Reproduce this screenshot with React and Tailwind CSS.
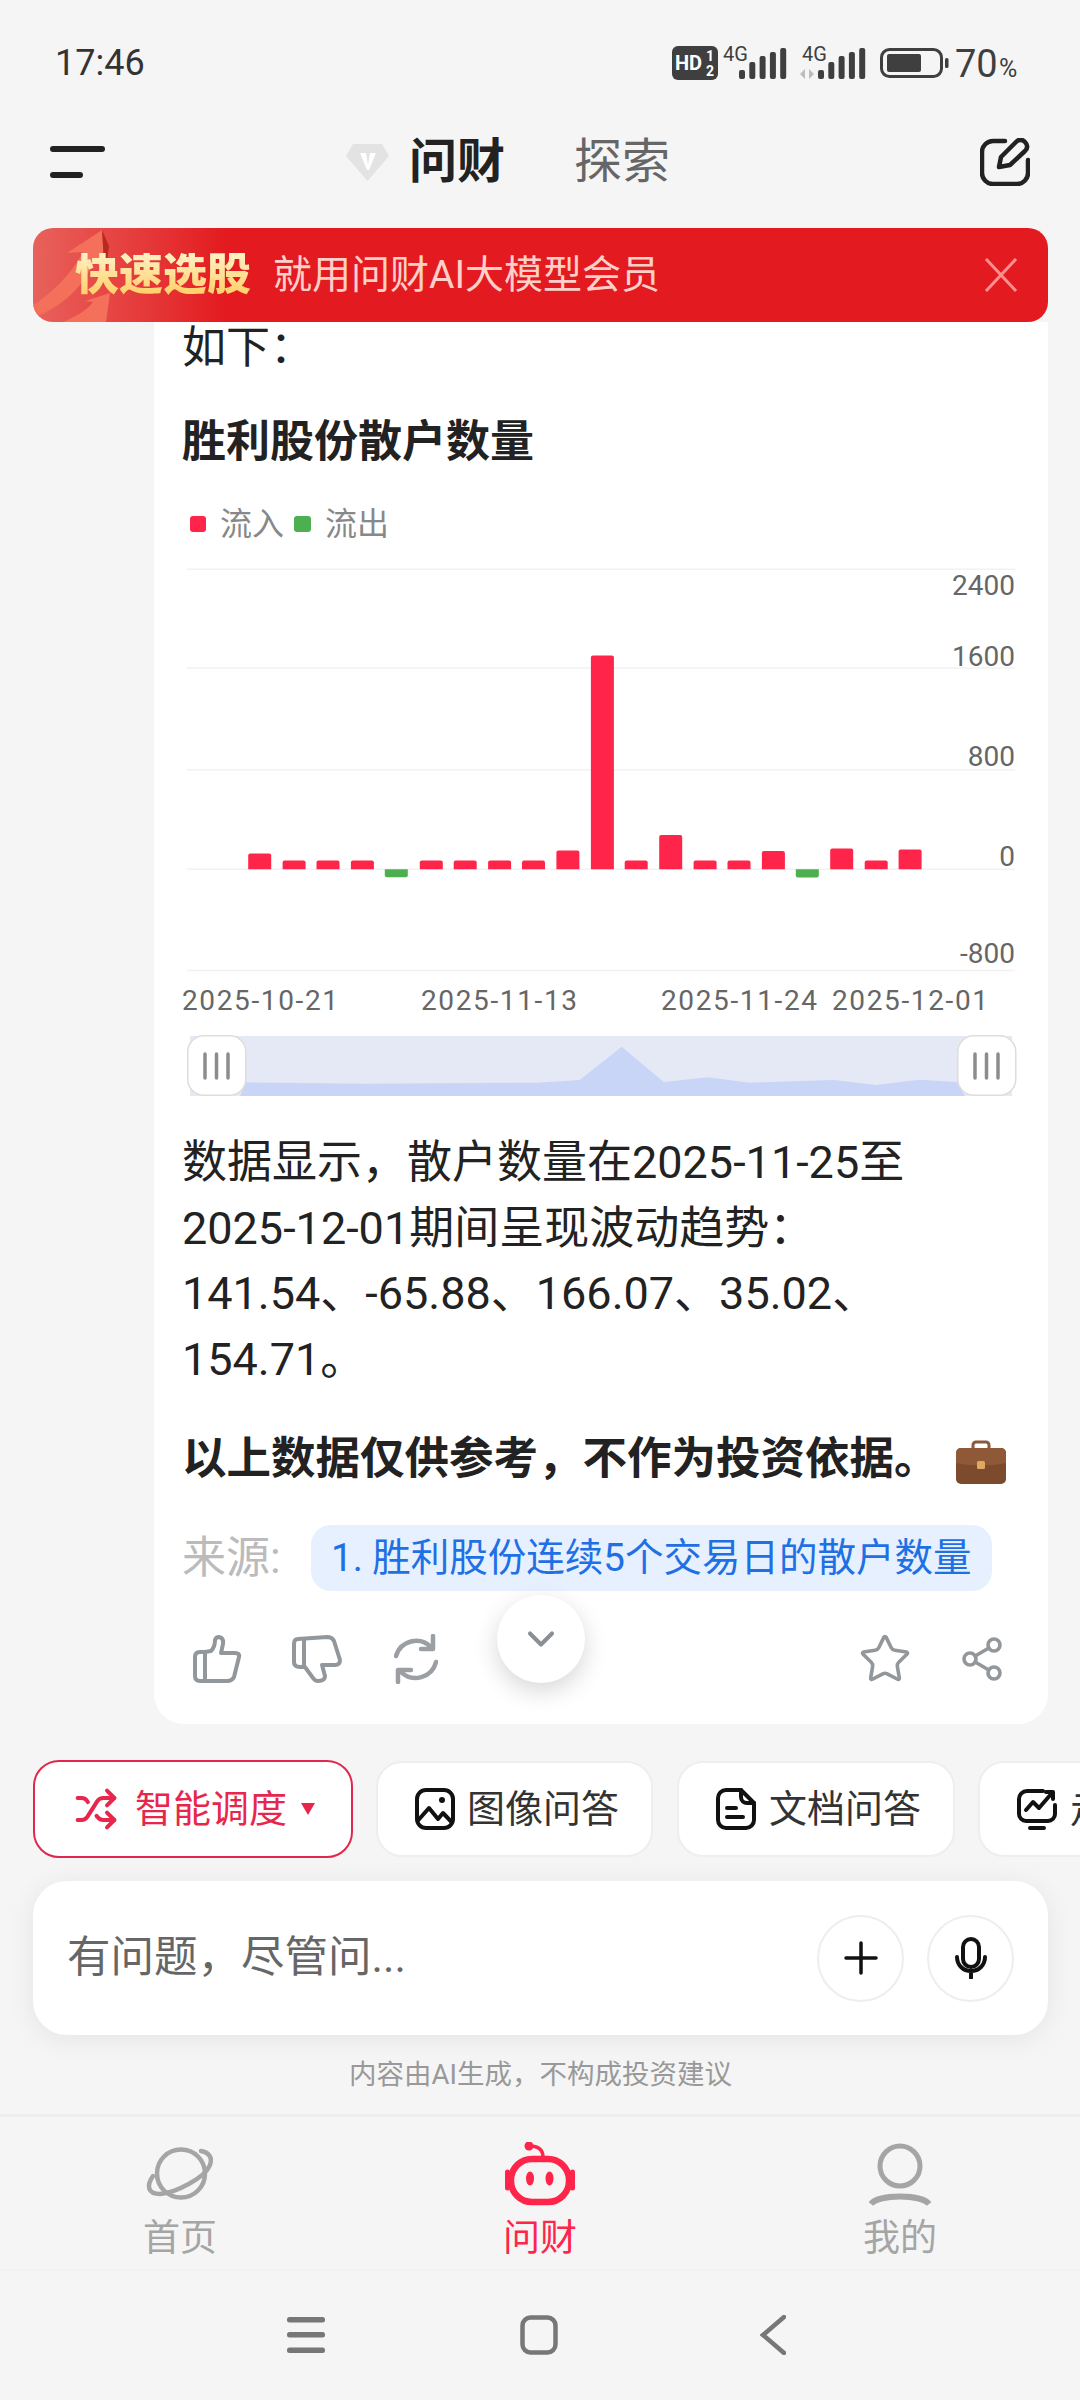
import React from 'react';
import { Star, Share2, ChevronDown, Shuffle } from 'lucide-react';

const bars = [
  [248.2, 853.5], [282.6, 860.6], [316.5, 860.6], [350.9, 860.6], [384.8, 877.2, 1], [419.8, 860.6], [453.7, 860.6], [488.1, 860.6],
  [522, 860.6], [556.4, 850.4], [590.9, 655.5], [624.7, 860.6], [659.2, 835], [693.6, 860.6], [727.5, 860.6], [761.9, 851],
  [795.8, 877.6, 1], [830.2, 848.4], [864.7, 860.6], [898.6, 849.6],
];
const zero = 869.3;
const gridY = [569.3, 668, 769.7, 869.3, 970.5];
const yLabels = [['2400', 585], ['1600', 656], ['800', 756], ['0', 856], ['-800', 953]];
const xLabels = [['2025-10-21', 182], ['2025-11-13', 421], ['2025-11-24', 661], ['2025-12-01', 832]];
const miniPts = [[135,187],[350,191],[655,188],[730,180],[805,80],[880,186],[958,172],[1033,188],[1183,180],[1258,195],[1335,179],[1402,186]]
  .map(([x, y]) => `${(170 + x / 1.782).toFixed(1)},${(1020 + y / 3).toFixed(1)}`).join(' ');

function Signal({ x }) {
  const hs = [9, 17, 23, 27, 31];
  return <g fill="#3f3f3f">{hs.map((h, i) => <rect key={i} x={x + i * 10.3} y={79 - h} width="6" height={h} rx="2" />)}</g>;
}

function StatusIcons() {
  return (
    <svg width="360" height="50" viewBox="665 38 360 50" className="shrink-0">
      <rect x="672" y="46" width="46" height="34" rx="6" fill="#3f3f3f" />
      <text x="675" y="70" fontSize="20" fontWeight="700" fill="#fff" fontFamily="Roboto">HD</text>
      <text x="706" y="61" fontSize="14" fontWeight="700" fill="#fff" fontFamily="Roboto">1</text>
      <text x="706" y="76" fontSize="14" fontWeight="700" fill="#fff" fontFamily="Roboto">2</text>
      <text x="723" y="61" fontSize="20" fill="#3f3f3f" fontFamily="Roboto">4G</text>
      <Signal x={739} />
      <text x="802" y="61" fontSize="20" fill="#3f3f3f" fontFamily="Roboto">4G</text>
      <path d="M805 69v10l-5-5zM809 69l5 5-5 5z" fill="#bcbcbc" />
      <Signal x={818} />
      <rect x="881.5" y="49.5" width="60" height="27" rx="8" fill="none" stroke="#3f3f3f" strokeWidth="3" />
      <rect x="887" y="54" width="34" height="18" rx="2" fill="#3f3f3f" />
      <rect x="945" y="58" width="3.5" height="10" rx="1.5" fill="#3f3f3f" />
      <text x="955" y="77" fontSize="38" fill="#3f3f3f" fontFamily="Roboto">70</text>
      <text x="999" y="77" fontSize="25" fill="#3f3f3f" fontFamily="Roboto">%</text>
    </svg>
  );
}

function Chart() {
  return (
    <svg width="894" height="540" viewBox="154 560 894 540" className="-ml-[28px] block">
      {gridY.map((y) => <line key={y} x1="187" x2="1015" y1={y} y2={y} stroke="#f2f2f2" strokeWidth="1.5" />)}
      {yLabels.map(([t, y]) => (
        <text key={t} x="1015" y={y + 10} textAnchor="end" fontSize="28" fill="#666" fontFamily="Roboto">{t}</text>
      ))}
      {bars.map(([x, y, neg], i) => neg
        ? <path key={i} d={`M${x} ${zero}h23v${y - zero - 2}a2 2 0 0 1 -2 2h-19a2 2 0 0 1 -2 -2z`} fill="#4caf50" />
        : <path key={i} d={`M${x} ${zero}V${y + 2}a2 2 0 0 1 2 -2h19a2 2 0 0 1 2 2V${zero}z`} fill="#ff2449" />)}
      {xLabels.map(([t, x]) => (
        <text key={t} x={x} y="1010" fontSize="28" fill="#666" fontFamily="Roboto" textLength="156" lengthAdjust="spacing">{t}</text>
      ))}
      <rect x="190" y="1036" width="822" height="60" fill="#e5e9f6" />
      <polygon points={`240,1096 ${miniPts} 965,1096`} fill="#c8d5f7" />
      {[187, 957].map((x) => (
        <g key={x}>
          <rect x={x + 0.75} y="1035.75" width="58" height="59.5" rx="16" fill="#fff" stroke="#dddddd" strokeWidth="1.5" />
          {[18, 29.5, 41].map((d) => <line key={d} x1={x + d} x2={x + d} y1="1054" y2="1078" stroke="#8c8c8c" strokeWidth="3.5" strokeLinecap="round" />)}
        </g>
      ))}
    </svg>
  );
}

function Tool({ className, icon, label, gap }) {
  return (
    <div className={`flex h-[96px] shrink-0 items-center whitespace-nowrap rounded-[26px] border-2 border-[#eeeeee] bg-white pl-[37px] text-[38px] text-[#333] ${className}`}>
      {icon}
      <span className={gap}>{label}</span>
    </div>
  );
}

export default function App() {
  return (
    <div className="flex h-[2400px] w-[1080px] flex-col overflow-hidden bg-[#f5f5f5] font-['Roboto','Noto_Sans_CJK_SC',sans-serif] text-[#222]">
      <div className="flex h-[100px] shrink-0 items-center justify-between pl-[55px] pr-[55px] pt-[26px]">
        <span className="text-[36px] leading-none text-[#333]">17:46</span>
        <StatusIcons />
      </div>

      <div className="flex h-[124px] shrink-0 items-center pl-[50px] pr-[50px]">
        <svg width="55" height="32" viewBox="0 0 55 32">
          <rect x="0" y="0" width="55" height="6" rx="3" fill="#222" />
          <rect x="0" y="26" width="33" height="6" rx="3" fill="#222" />
        </svg>
        <svg width="43" height="37" viewBox="0 0 43 37" className="ml-[241px]">
          <path d="M7 0h29l7 12-21.500 25L0 12z" fill="#e3e3e3" />
          <path d="M14 9h6l2 12 2-12h6l-7 17h-2z" fill="#fff" />
        </svg>
        <span className="ml-[20px] text-[48px] font-bold leading-none text-[#222]">问财</span>
        <span className="ml-[69px] text-[48px] leading-none text-[#666]">探索</span>
        <svg width="50" height="48" viewBox="0 0 50 48" fill="none" stroke="#222" strokeWidth="4.500" className="ml-auto" strokeLinecap="round" strokeLinejoin="round">
          <path d="M25 3H13A11 11 0 0 0 2 14v21a11 11 0 0 0 11 11h24a11 11 0 0 0 11-11V22" />
          <path d="M19 29l2-10L36 4c3-3 6-3 9 0s3 6 0 9L30 27z" />
        </svg>
      </div>

      <div className="relative ml-[33px] mt-[4px] flex h-[94px] w-[1015px] shrink-0 items-center overflow-hidden rounded-[20px] bg-[linear-gradient(90deg,#e8625c_0%,#e31b20_19%,#e31b20_100%)]">
        <svg width="110" height="94" viewBox="0 0 110 94" className="absolute left-0 top-0">
          <path d="M0 78C22 62 40 44 50 24L34 25 69 2 72 50 62 30C52 58 30 78 0 90z" fill="#f4705a" />
          <path d="M69 2l3 48 4-32z" fill="#b92a1c" />
          <path d="M30 94c14-6 24-12 30-20l-8-1 25-8-4 29z" fill="#f4705a" />
        </svg>
        <span className="relative ml-[42px] bg-[linear-gradient(180deg,#fff2c6,#ffcd62)] bg-clip-text text-[44px] font-black leading-none text-transparent">快速选股</span>
        <span className="relative ml-[22px] text-[39px] leading-none text-[#ffcfc8]">就用问财AI大模型会员</span>
        <svg width="34" height="34" viewBox="0 0 34 34" className="ml-auto mr-[30px]" stroke="#ff8f8f" strokeWidth="3">
          <path d="M2 1l30 32M32 1L2 33" />
        </svg>
      </div>

      <div className="relative ml-[154px] flex w-[894px] shrink-0 flex-col rounded-b-[30px] bg-white pb-[40px] pl-[28px] pr-[32px]">
        <div className="h-[52px] text-[44px] leading-[52px]">如下：</div>
        <div className="mt-[38px] text-[44px] font-bold leading-[60px]">胜利股份散户数量</div>
        <div className="mt-[32px] flex h-[40px] items-center pl-[8px] text-[32px] text-[#888]">
          <span className="h-[16px] w-[16px] rounded-[3px] bg-[#ff2449]" />
          <span className="ml-[14px]">流入</span>
          <span className="ml-[10px] h-[16px] w-[17px] rounded-[3px] bg-[#4caf50]" />
          <span className="ml-[14px]">流出</span>
        </div>
        <div className="mt-[16px]"><Chart /></div>
        <div className="mt-[30px] whitespace-nowrap text-[45px] leading-[65.5px] text-[#222]">
          <div>数据显示，散户数量在2025-11-25至</div>
          <div>2025-12-01期间呈现波动趋势：</div>
          <div>141.54、-65.88、166.07、35.02、</div>
          <div>154.71。</div>
        </div>
        <div className="mt-[37px] flex h-[60px] items-center whitespace-nowrap text-[44.500px] font-bold leading-[60px]">
          <span className="shrink-0">以上数据仅供参考，不作为投资依据。</span>
          <svg width="50" height="44" viewBox="0 0 50 44" className="ml-[17px] mt-[6px] shrink-0">
            <path d="M17 8V5a3 3 0 0 1 3-3h10a3 3 0 0 1 3 3v3" fill="none" stroke="#8a5a3c" strokeWidth="3" />
            <rect x="0" y="8" width="50" height="36" rx="5" fill="#7c4a2d" />
            <path d="M0 13a5 5 0 0 1 5-5h40a5 5 0 0 1 5 5v10c-10 3-40 3-50 0z" fill="#8f5836" />
            <rect x="21" y="21" width="8" height="8" rx="1.500" fill="#e0a95f" />
          </svg>
        </div>
        <div className="mt-[36px] flex h-[66px] items-center">
          <span className="w-[129px] shrink-0 text-[44px] text-[#bbbbbb]">来源:</span>
          <div className="flex h-[66px] w-[681px] shrink-0 items-center whitespace-nowrap rounded-[20px] bg-[#e6f0fe] pl-[20px] text-[38.500px] text-[#1f6fe5]">1. 胜利股份连续5个交易日的散户数量</div>
        </div>
        <div className="mt-[43px] flex h-[50px] items-center text-[#92979c]">
          <svg width="49" height="48" viewBox="13 15 49 48" fill="none" stroke="currentColor" strokeWidth="4" strokeLinejoin="round" strokeLinecap="round" className="ml-[11px] shrink-0">
            <path d="M25 32l6-1c3-3 4-7 4-11q1-3 4-3q5 1 4 7l-2 9h14q5 0 4 4l-5 20q-2 4-7 4H20q-5 0-5-5V37q0-5 5-5h5M25 32v29" />
          </svg>
          <svg width="50" height="48" viewBox="112 15 50 48" fill="none" stroke="currentColor" strokeWidth="4" strokeLinejoin="round" strokeLinecap="round" className="ml-[50px] shrink-0">
            <path d="M118 19l29-2q5 0 7 4l6 19q0 5-5 5h-13l3 11q0 5-7 5q-3 0-5-3l-8-11h-5q-6 0-6-5V24q0-5 4-5M124 19v28" />
          </svg>
          <svg width="44" height="50" viewBox="214 14 44 50" fill="none" stroke="#9b9fa3" strokeWidth="4.500" strokeLinejoin="round" strokeLinecap="round" className="ml-[52px] shrink-0">
            <path d="M216 36A21 21 0 0 1 251 27M253 16v13h-12M256 42A21 21 0 0 1 221 52M218 62V50h13" />
          </svg>
          <Star size={54} strokeWidth={1.600} className="ml-auto" />
          <Share2 size={48} strokeWidth={1.800} className="ml-[46px] mr-[10px]" />
        </div>
        <div className="absolute left-[343px] top-[1273px] flex h-[88px] w-[88px] items-center justify-center rounded-full bg-white text-[#8a8f95] shadow-[0_8px_24px_rgba(0,0,0,0.16)]">
          <ChevronDown size={44} strokeWidth={2.200} />
        </div>
      </div>

      <div className="ml-[33px] mt-[36px] flex h-[98px] shrink-0 items-center">
        <div className="flex h-[98px] w-[320px] shrink-0 items-center whitespace-nowrap rounded-[26px] border-2 border-[#e0284f] bg-white pl-[39px] text-[38px] text-[#e8264c]">
          <Shuffle size={44} strokeWidth={2.200} className="shrink-0" />
          <span className="ml-[17px]">智能调度</span>
          <svg width="14" height="12" viewBox="0 0 14 12" className="ml-[14px]"><path d="M0 0h14L7 12z" fill="#e8264c" /></svg>
        </div>
        <Tool className="ml-[23px] w-[277px]" gap="ml-[12px]" label="图像问答" icon={
          <svg width="40" height="42" viewBox="0 0 40 42" fill="none" stroke="#111" strokeWidth="4" strokeLinejoin="round" className="shrink-0">
            <rect x="2" y="2" width="36" height="38" rx="9" />
            <path d="M2.500 33L14 20l9 11 5-6 9.500 10" />
            <circle cx="27" cy="12" r="3" fill="#111" stroke="none" />
          </svg>
        } />
        <Tool className="ml-[24px] w-[278px]" gap="ml-[13px]" label="文档问答" icon={
          <svg width="40" height="42" viewBox="0 0 40 42" fill="none" stroke="#111" strokeWidth="4" strokeLinejoin="round" strokeLinecap="round" className="shrink-0">
            <path d="M10 2h15l13 13v17a8 8 0 0 1-8 8H10a8 8 0 0 1-8-8V10a8 8 0 0 1 8-8z" />
            <path d="M25 2v7a6 6 0 0 0 6 6h7M11 20h9M11 29h16" />
          </svg>
        } />
        <Tool className="ml-[23px] w-[240px]" gap="ml-[13px]" label="走势问答" icon={
          <svg width="40" height="42" viewBox="0 0 40 42" fill="none" stroke="#111" strokeWidth="4" strokeLinecap="round" strokeLinejoin="round" className="shrink-0">
            <path d="M26 3H10a8 8 0 0 0-8 8v15a7 7 0 0 0 7 7h22a7 7 0 0 0 7-7V17" />
            <path d="M9 22l7-8 6 6L35 5M29 4h7v7M13 40h14" />
          </svg>
        } />
      </div>

      <div className="ml-[33px] mt-[23px] flex h-[154px] w-[1015px] shrink-0 items-center rounded-[34px] bg-white pl-[34px] pr-[34px] shadow-[0_4px_28px_rgba(0,0,0,0.07)]">
        <span className="text-[43.500px] text-[#666]">有问题，尽管问...</span>
        <div className="ml-auto flex h-[87px] w-[87px] items-center justify-center rounded-full border-2 border-[#eeeeee]">
          <svg width="34" height="34" viewBox="0 0 34 34" stroke="#111" strokeWidth="3.500" strokeLinecap="round"><path d="M17 2v30M2 17h30" /></svg>
        </div>
        <div className="ml-[23px] flex h-[87px] w-[87px] items-center justify-center rounded-full border-2 border-[#eeeeee]">
          <svg width="32" height="42" viewBox="0 0 32 42" fill="none" stroke="#111" strokeWidth="4" strokeLinecap="round">
            <rect x="8" y="2" width="16" height="28" rx="8" />
            <path d="M2 20c0 8 6 14 14 14s14-6 14-14M16 34v7" />
          </svg>
        </div>
      </div>

      <div className="mt-[20px] flex h-[40px] shrink-0 items-center justify-center pl-[1px] text-[27.500px] text-[#999]">内容由AI生成，不构成投资建议</div>

      <div className="mt-[19px] h-[3px] shrink-0 bg-[#eeeeee]" />

      <div className="grid h-[153px] shrink-0 grid-cols-3 border-b border-[#f0f0f0] pt-[25px] text-[37px] leading-[40px] text-[#a5a5a5]">
        <div className="flex flex-col items-center">
          <svg width="70" height="66" viewBox="145 2142 70 66" fill="none" stroke="#a5a5a5" strokeWidth="4.500" strokeLinecap="round">
            <circle cx="181" cy="2173.500" r="24" />
            <path d="M153 2176c-7 10-5 18 7 18 15-1 45-16 50-29 3-8-2-13-9-14" />
          </svg>
          <span className="mt-[11px]">首页</span>
        </div>
        <div className="flex flex-col items-center text-[#ff2449]">
          <svg width="70" height="66" viewBox="505 2142 70 66" fill="none" stroke="#ff2449" strokeWidth="6.500">
            <rect x="511" y="2159" width="58" height="43" rx="21" />
            <path d="M507.500 2172v16M572.500 2172v16" strokeLinecap="round" strokeWidth="5" />
            <path d="M529 2146c9 0 14 3 14 11" strokeWidth="3.500" />
            <circle cx="529" cy="2146" r="4.500" fill="#ff2449" stroke="none" />
            <ellipse cx="530" cy="2178.500" rx="4" ry="7" fill="#ff2449" stroke="none" />
            <ellipse cx="549.500" cy="2178.500" rx="4" ry="7" fill="#ff2449" stroke="none" />
          </svg>
          <span className="mt-[11px]">问财</span>
        </div>
        <div className="flex flex-col items-center">
          <svg width="66" height="66" viewBox="867 2142 66 66" fill="none" stroke="#a5a5a5" strokeWidth="5">
            <ellipse cx="900" cy="2166" rx="20" ry="20" />
            <path d="M871 2204c8-10 50-10 58 0" strokeWidth="6" />
          </svg>
          <span className="mt-[11px]">我的</span>
        </div>
      </div>

      <div className="flex h-[130px] shrink-0 items-center justify-center pr-[8px]">
        <svg width="38" height="36" viewBox="0 0 38 36" fill="#777">
          <rect y="0" width="38" height="5.500" rx="2.500" />
          <rect y="15" width="38" height="5.500" rx="2.500" />
          <rect y="30.500" width="38" height="5.500" rx="2.500" />
        </svg>
        <svg width="38" height="40" viewBox="0 0 38 40" fill="none" stroke="#777" strokeWidth="4.500" className="ml-[195px]">
          <rect x="2.500" y="2.500" width="33" height="35" rx="8" />
        </svg>
        <svg width="26" height="40" viewBox="0 0 26 40" fill="none" stroke="#777" strokeWidth="4.500" strokeLinecap="round" className="ml-[202px]">
          <path d="M24 2L3 20l21 18" />
        </svg>
      </div>
    </div>
  );
}
